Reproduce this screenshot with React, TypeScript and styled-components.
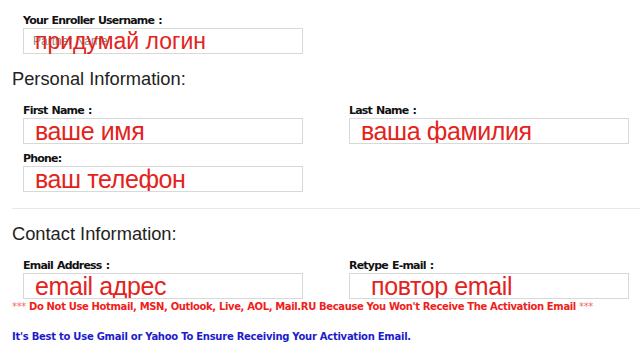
import React from "react"
import styled, { createGlobalStyle } from "styled-components"

const GlobalStyle = createGlobalStyle`
  body {
    margin: 0;
    background: #fff;
    font-family: "Liberation Sans", Arial, sans-serif;
  }
`

const Page = styled.div`
  padding: 14px 0 0 12px;
`

const Section = styled.div`
  padding-left: 11px;
`

const FieldGrid = styled.div`
  display: grid;
  grid-template-columns: 280px 280px;
  column-gap: 46px;
  row-gap: 8px;
`

const Field = styled.div`
  display: flex;
  flex-direction: column;
`

const Label = styled.label`
  font-family: "DejaVu Sans", Verdana, sans-serif;
  font-weight: bold;
  font-size: 11px;
  letter-spacing: -0.8px;
  word-spacing: 1px;
  line-height: 13px;
  height: 13px;
  color: #111;
  margin-bottom: 1px;
  white-space: nowrap;
`

const Input = styled.input<{ $indent?: number }>`
  box-sizing: border-box;
  width: 280px;
  height: 26px;
  border: 1px solid #d8d8d8;
  padding: 0 0 0 ${(p) => p.$indent ?? 11}px;
  margin: 0;
  font-family: "Liberation Sans", Arial, sans-serif;
  font-size: 25px;
  letter-spacing: -0.4px;
  color: #e3231c;
  background: #fff;
  outline: none;
`

const InputWrap = styled.div`
  position: relative;
  width: 280px;
  height: 26px;
`

const Hint = styled.span`
  position: absolute;
  left: 10px;
  top: 6px;
  font-family: "Liberation Sans", Arial, sans-serif;
  font-size: 12px;
  color: #8a8a8a;
  pointer-events: none;
`

const Overlay = styled.span`
  position: absolute;
  left: 12px;
  top: -1px;
  font-family: "Liberation Sans", Arial, sans-serif;
  font-size: 23px;
  line-height: 28px;
  color: #e3231c;
  pointer-events: none;
  white-space: nowrap;
`

const Heading = styled.h2<{ $top: number }>`
  margin: ${(p) => p.$top}px 0 15px 0;
  font-family: "Liberation Sans", Arial, sans-serif;
  font-weight: normal;
  font-size: 18.3px;
  line-height: 20px;
  color: #222;
`

const Divider = styled.hr`
  margin: 16px 0 0 0;
  border: 0;
  border-top: 1px solid #e8e8e8;
`

const Notice = styled.p<{ $tone: "warn" | "info" }>`
  margin: ${(p) => (p.$tone === "warn" ? "2px" : "18px")} 0 0 0;
  font-family: "DejaVu Sans", Verdana, sans-serif;
  font-weight: bold;
  font-size: 10px;
  letter-spacing: ${(p) => (p.$tone === "warn" ? "-0.36px" : "-0.26px")};
  line-height: 12px;
  white-space: nowrap;
  color: ${(p) => (p.$tone === "warn" ? "#f0211a" : "#1c1ccc")};
`

const Stars = styled.span`
  color: #f26b66;
  font-weight: normal;
`

const TextField = ({
  label,
  value,
  indent,
}: {
  label: string
  value: string
  indent?: number
}) => (
  <Field>
    <Label>{label}</Label>
    <Input defaultValue={value} $indent={indent} />
  </Field>
)

export default function App() {
  return (
    <>
      <GlobalStyle />
      <Page>
        <Section>
          <Field>
            <Label>Your Enroller Username :</Label>
            <InputWrap>
              <Input as="div" />
              <Hint>Partner Name</Hint>
              <Overlay>придумай логин</Overlay>
            </InputWrap>
          </Field>
        </Section>

        <Heading $top={15}>Personal Information:</Heading>
        <Section>
          <FieldGrid>
            <TextField label="First Name :" value="ваше имя" />
            <TextField label="Last Name :" value="ваша фамилия" />
            <TextField label="Phone:" value="ваш телефон" />
          </FieldGrid>
        </Section>

        <Divider />

        <Heading $top={15}>Contact Information:</Heading>
        <Section>
          <FieldGrid>
            <TextField label="Email Address :" value="email адрес" />
            <TextField label="Retype E-mail :" value="повтор email" indent={21} />
          </FieldGrid>
        </Section>

        <Notice $tone="warn">
          <Stars>***</Stars> Do Not Use Hotmail, MSN, Outlook, Live, AOL, Mail.RU Because You
          Won't Receive The Activation Email <Stars>***</Stars>
        </Notice>
        <Notice $tone="info">
          It's Best to Use Gmail or Yahoo To Ensure Receiving Your Activation Email.
        </Notice>
      </Page>
    </>
  )
}
